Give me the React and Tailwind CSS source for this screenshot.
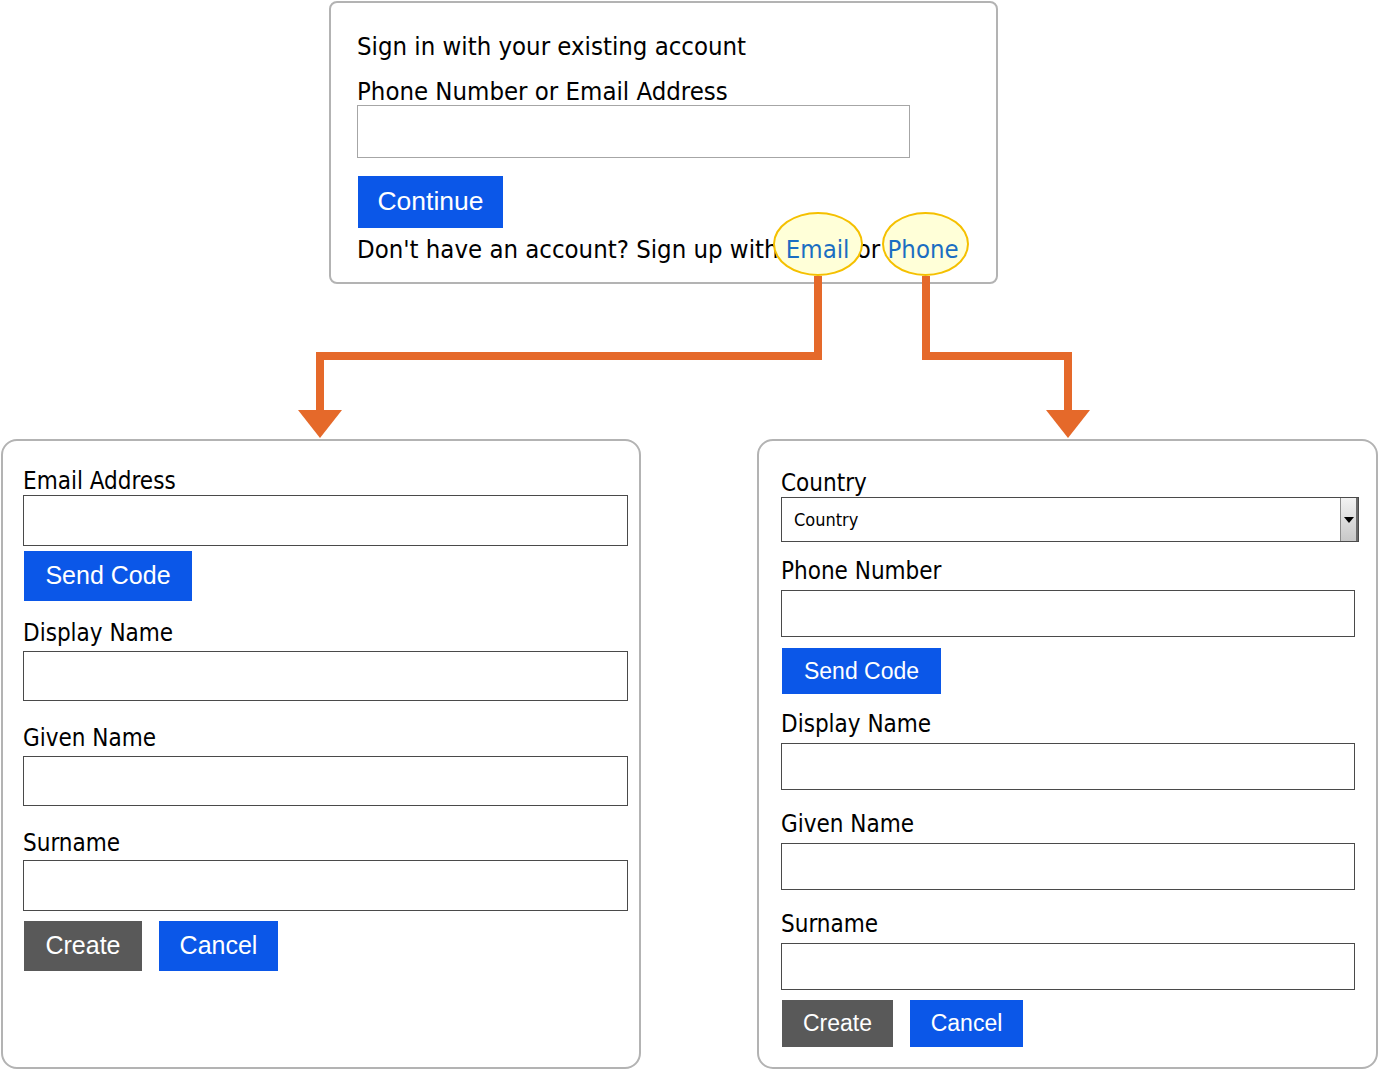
import React from 'react';

const labelFont = { fontFamily: '"DejaVu Sans Condensed", "DejaVu Sans", sans-serif' };
const btnFont = { fontFamily: '"Liberation Sans", Arial, sans-serif' };

// Connector arrows between the panels
const Arrows = () => (
  <svg className="absolute left-0 top-0 pointer-events-none" width="1378" height="1070" viewBox="0 0 1378 1070">
    <path d="M818 276 V356 H320 V414" fill="none" stroke="#e5692a" strokeWidth="8" />
    <polygon points="298,410 342,410 320,438" fill="#e5692a" />
    <path d="M926 276 V356 H1068 V414" fill="none" stroke="#e5692a" strokeWidth="8" />
    <polygon points="1046,410 1090,410 1068,438" fill="#e5692a" />
  </svg>
);

const Circled = ({ children, left, right }) => (
  <span className="relative inline-block">
    <span
      className="absolute z-10 rounded-[50%] bg-[#ffffd8] border-2 border-[#f5c000]"
      style={{ left: -left, right: -right, top: -23, bottom: -13 }}
    />
    <span className="relative z-20 text-[#1b6ec2]">{children}</span>
  </span>
);

const Label = ({ children, className = '' }) => (
  <div className={`text-[24px] leading-[28px] text-black ${className}`} style={labelFont}>
    {children}
  </div>
);

const Button = ({ children, dark, className = '' }) => (
  <button
    className={`flex items-center justify-center text-white ${dark ? 'bg-[#595959]' : 'bg-[#0b57e8]'} ${className}`}
    style={btnFont}
  >
    {children}
  </button>
);

const Field = ({ className = '' }) => <div className={`border border-[#4a4a4a] bg-white ${className}`} />;

export default function App() {
  return (
    <div className="relative w-[1378px] h-[1070px] bg-white overflow-hidden">
      {/* Sign in panel */}
      <div className="pl-[329px] pt-px">
        <div className="w-[669px] h-[283px] border-2 border-[#b3b3b3] rounded-[8px] pl-[26px] pt-[29px]">
          <Label className="text-[25.5px]">Sign in with your existing account</Label>
          <Label className="mt-[17px] text-[25.5px]">Phone Number or Email Address</Label>
          <div className="w-[553px] h-[53px] border border-[#a6a6a6]" />
          <Button className="mt-[18px] w-[145px] h-[52px] ml-px text-[26.5px]">Continue</Button>
          <div className="mt-[7px] text-[25.5px] leading-[28px] text-black whitespace-nowrap" style={labelFont}>
            Don't have an account? Sign up with <Circled left={13} right={14}>Email</Circled> or{' '}
            <Circled left={6} right={10}>Phone</Circled>
          </div>
        </div>
      </div>

      {/* Sign up panels */}
      <div className="flex mt-[155px]">
        <div className="ml-px w-[640px] h-[630px] border-2 border-[#b3b3b3] rounded-[16px] pl-[20px] pt-[26px]">
          <Label>Email Address</Label>
          <Field className="w-[605px] h-[51px]" />
          <Button className="mt-[5px] w-[168px] h-[50px] ml-px text-[25px]">Send Code</Button>
          <Label className="mt-[18px]">Display Name</Label>
          <Field className="mt-[4px] w-[605px] h-[50px]" />
          <Label className="mt-[23px]">Given Name</Label>
          <Field className="mt-[4px] w-[605px] h-[50px]" />
          <Label className="mt-[23px]">Surname</Label>
          <Field className="mt-[3px] w-[605px] h-[51px]" />
          <div className="flex gap-[17px] mt-[10px] ml-px">
            <Button dark className="w-[118px] h-[50px] text-[25px]">Create</Button>
            <Button className="w-[119px] h-[50px] text-[25px]">Cancel</Button>
          </div>
        </div>

        <div className="ml-[116px] w-[621px] h-[630px] border-2 border-[#b3b3b3] rounded-[16px] pl-[22px] pt-[28px]">
          <Label className="leading-[27px] text-[23px]">Country</Label>
          <div className="flex w-[578px] h-[45px] border border-[#4a4a4a]">
            <div className="flex-1 flex items-center pl-[12px] text-[18px] text-black" style={labelFont}>Country</div>
            <div className="w-[18px] flex items-center justify-center bg-gradient-to-b from-[#f2f2f2] to-[#c8c8c8] border-l border-[#8a8a8a] border-r-2 border-r-[#6a6a6a]">
              <svg width="10" height="6" viewBox="0 0 10 6"><polygon points="0,0 10,0 5,6" fill="#000" /></svg>
            </div>
          </div>
          <Label className="mt-[15px] text-[23px]">Phone Number</Label>
          <Field className="mt-[5px] w-[574px] h-[47px]" />
          <Button className="mt-[11px] w-[159px] h-[46px] ml-px text-[23px]">Send Code</Button>
          <Label className="mt-[16px] text-[23px]">Display Name</Label>
          <Field className="mt-[5px] w-[574px] h-[47px]" />
          <Label className="mt-[20px] text-[23px]">Given Name</Label>
          <Field className="mt-[5px] w-[574px] h-[47px]" />
          <Label className="mt-[20px] text-[23px]">Surname</Label>
          <Field className="mt-[5px] w-[574px] h-[47px]" />
          <div className="flex gap-[17px] mt-[10px] ml-px">
            <Button dark className="w-[111px] h-[47px] text-[23px]">Create</Button>
            <Button className="w-[113px] h-[47px] text-[23px]">Cancel</Button>
          </div>
        </div>
      </div>

      <Arrows />
    </div>
  );
}
